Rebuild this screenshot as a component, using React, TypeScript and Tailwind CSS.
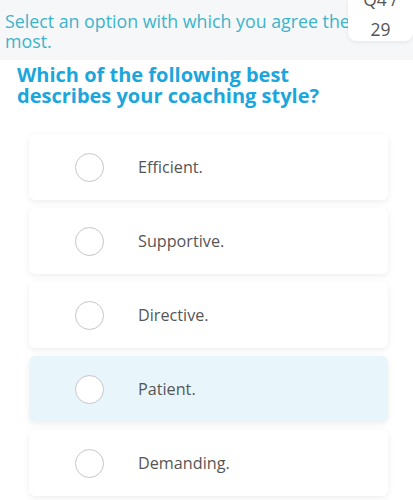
import React from 'react';

const options = ['Efficient.', 'Supportive.', 'Directive.', 'Patient.', 'Demanding.'];
const highlighted = 'Patient.';

export default function App() {
  return (
    <div className="min-h-[500px] bg-white font-['Open_Sans',sans-serif] overflow-hidden">
      {/* Instruction band */}
      <div className="h-[60px] bg-[#f6f7f9] flex items-start">
        <p className="w-[352px] shrink-0 pl-[5px] pt-[11px] text-[17.8px] leading-[20px] text-[#3bb4cb]">
          Select an option with which you agree the most.
        </p>
        <div className="-ml-[4px] w-[65px] h-[41px] shrink-0 bg-white rounded-b-lg shadow-[0_1px_4px_rgba(0,0,0,0.08)] flex flex-col items-center overflow-hidden">
          <span className="text-[17.5px] leading-[26px] text-[#555] -mt-[14px]">Q4 /</span>
          <span className="text-[17.5px] leading-[22px] text-[#555] mt-[6px]">29</span>
        </div>
      </div>

      {/* Question */}
      <h1 className="px-[17px] pt-[4px] text-[20px] leading-[21px] font-bold text-[#1ba6dc]">
        Which of the following best
        <br />
        describes your coaching style?
      </h1>

      {/* Options */}
      <div className="mt-[28px] ml-[29px] w-[359px] flex flex-col gap-[8px]">
        {options.map((o) => (
          <div
            key={o}
            className={`h-[66px] rounded-md flex items-center shadow-[0_2px_6px_rgba(0,0,0,0.07)] ${
              o === highlighted ? 'bg-[#e8f6fb]' : 'bg-white'
            }`}
          >
            <span className="ml-[46px] w-[29px] h-[29px] rounded-full border-[1.5px] border-[#c6c6c6] bg-white shrink-0" />
            <span className="ml-[34px] text-[16.2px] text-[#555]">{o}</span>
          </div>
        ))}
      </div>
    </div>
  );
}
